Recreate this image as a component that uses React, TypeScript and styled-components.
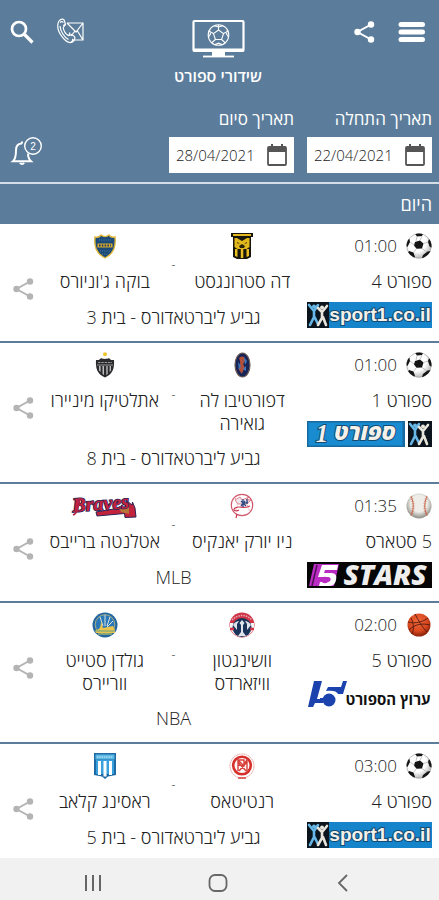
import React, { useState } from "react";
import styled, { createGlobalStyle } from "styled-components";

const steel = "#5b7d9b";
const ink = "#222";

const GlobalStyle = createGlobalStyle`
  *, *::before, *::after { box-sizing: border-box; }
  body {
    margin: 0;
    background: #fff;
    color: ${ink};
    font-family: "Open Sans", "Noto Sans", "DejaVu Sans", sans-serif;
    font-size: 18px;
    line-height: 24px;
  }
  svg { flex: none; overflow: visible; }
`;

const Page = styled.div`
  height: 100vh;
  display: flex;
  flex-direction: column;
`;

const Header = styled.header`
  background: ${steel};
  color: #fff;
  border-bottom: 2px solid #d3dee7;
`;

const TopBar = styled.div`
  display: grid;
  grid-template-columns: 1fr auto 1fr;
  padding: 18px 13px 0 10px;
`;

const Actions = styled.div<{ $end?: boolean }>`
  display: flex;
  align-items: center;
  justify-content: ${(p) => (p.$end ? "flex-end" : "flex-start")};
  gap: 23px;
  height: 28px;
`;

const IconButton = styled.button`
  display: inline-flex;
  align-items: center;
  justify-content: center;
  padding: 0;
  border: 0;
  background: none;
  color: inherit;
  cursor: pointer;
`;

const Brand = styled.h1`
  display: flex;
  flex-direction: column;
  align-items: center;
  gap: 8px;
  margin: 0;
  font-size: 16px;
  line-height: 20px;
  font-weight: 600;
`;

const FilterBar = styled.form`
  display: flex;
  align-items: flex-end;
  gap: 13px;
  padding: 21px 7px 9px;
`;

const DateField = styled.label`
  flex: 0 1 125px;
  min-width: 0;
  display: flex;
  flex-direction: column;
  gap: 6px;
  font-size: 17px;
`;

const DateBox = styled.span`
  display: flex;
  align-items: center;
  direction: ltr;
  height: 36px;
  padding: 0 7px;
  background: #fff;
  color: #555;
`;

const DateInput = styled.input`
  flex: 1;
  min-width: 0;
  padding: 0;
  border: 0;
  outline: 0;
  background: none;
  color: ${ink};
  font-family: inherit;
  font-size: 15px;
  font-weight: 300;
`;

const BellSlot = styled.div`
  margin-inline-start: auto;
  height: 36px;
  padding-left: 5px;
`;

const List = styled.main`
  flex: 1;
  min-height: 0;
  overflow-y: auto;
  scrollbar-width: none;
  font-weight: 300;
`;

const DayHeading = styled.h2`
  margin: 0;
  padding: 8px 7px;
  background: ${steel};
  color: #fff;
  font-size: 18px;
  font-weight: 400;
`;

const EventRow = styled.article`
  display: grid;
  grid-template-columns: 125px 1fr 34px;
  column-gap: 6px;
  padding: 8px 7px 12px 6px;
  border-bottom: 2px solid ${steel};
`;

const Channel = styled.div`
  display: flex;
  flex-direction: column;
`;

const TimeLine = styled.div`
  display: flex;
  align-items: center;
  gap: 9px;
  height: 28px;
  font-size: 17px;
`;

const ChannelName = styled.div`
  margin: 9px 0;
`;

const Match = styled.div`
  text-align: center;
`;

const Teams = styled.div`
  display: grid;
  grid-template-columns: 1fr 20px 1fr;
  align-items: center;
`;

const Team = styled.div`
  align-self: start;
  display: flex;
  flex-direction: column;
  align-items: center;
  min-height: 62px;
  line-height: 23px;
`;

const Crest = styled.span`
  display: flex;
  align-items: center;
  height: 28px;
  margin-bottom: 10px;
`;

const Dash = styled.span`
  padding-top: 4px;
  font-size: 12px;
`;

const Competition = styled.div`
  margin-top: 11px;
`;

const ShareSlot = styled.div`
  display: flex;
  justify-content: center;
  align-self: start;
  padding-top: 45px;
  color: #b4b4b4;
`;

const SystemBar = styled.nav`
  flex: none;
  display: flex;
  justify-content: center;
  gap: 101px;
  padding: 13px 4px 5px 0;
  background: #f1f1f1;
  color: #666;
`;

const ShareIcon = () => (
  <svg width="22" height="24" viewBox="0 0 22 24" aria-hidden="true">
    <path d="M18 4.500 4.500 12 18 19.500" fill="none" stroke="currentColor" strokeWidth="2" />
    <circle cx="18" cy="4.500" r="3.200" fill="currentColor" />
    <circle cx="4.500" cy="12" r="3.200" fill="currentColor" />
    <circle cx="18" cy="19.500" r="3.200" fill="currentColor" />
  </svg>
);

const MenuIcon = () => (
  <svg width="28" height="22" viewBox="0 0 28 22" aria-hidden="true">
    <path d="M3 3.500h21.500M3 11h21.500M3 18.500h21.500" stroke="currentColor" strokeWidth="5" strokeLinecap="round" />
  </svg>
);

const SearchIcon = () => (
  <svg width="24" height="24" viewBox="0 0 24 24" fill="none" stroke="currentColor" aria-hidden="true">
    <circle cx="9" cy="9" r="7" strokeWidth="2.700" />
    <path d="m14 14 8.500 8.500" strokeWidth="3.200" />
  </svg>
);

const ContactIcon = () => (
  <svg width="28" height="28" viewBox="0 0 28 28" fill="none" stroke="currentColor" strokeWidth="1.200" aria-hidden="true">
    <path d="M10 5h16v17H15M10 5l9 9 7-9M26 22l-5.500-9M14 18l4-5" />
    <path d="M2 3c2-2.500 5-2.300 5.500 0l.8 3c.3 1.500-2.300 2.600-2 4 .5 3.500 2.500 6 5 7.500 1.300.7 2.200-1.500 3.600-.8l2.200 1.600c1.800 1.300.4 4.800-2 5.800C9 26.800 0 14 .8 7c.1-1.500.5-2.900 1.200-4z" />
    <path d="M3 4.500c1.700-1.300 3-1 3.200.2M13.500 24.800c1.800-1 2.400-2.300 2.300-4M3 8c.4 5 4 11 8.500 13.600M6 7.500l3-1.300M12 17l1-2.400" />
  </svg>
);

const BellIcon = () => (
  <svg width="32" height="30" viewBox="0 0 32 30" fill="none" stroke="currentColor" strokeWidth="1.400" aria-hidden="true">
    <path d="M10 6.500c-4 0-6 3-6 6.800C4 20 3 22.500 1 24.300h18c-2-1.800-3-4.300-3-7.800" strokeWidth="2" />
    <path d="M10 6.500V4.600M8 25.800c.8 1.500 3.200 1.500 4 0" strokeWidth="2" />
    <circle cx="21" cy="9" r="8.300" />
    <text x="21" y="12.500" fontSize="10" textAnchor="middle" fill="currentColor" stroke="none" direction="ltr">2</text>
  </svg>
);

const TvLogo = () => (
  <svg width="53" height="40" viewBox="0 0 53 40" fill="none" stroke="currentColor" aria-hidden="true">
    <rect x="1.500" y="3" width="50" height="30" rx="1" strokeWidth="2.200" />
    <path d="M1 32h51" strokeWidth="3" />
    <path d="M20 36h13" strokeWidth="4" />
    <path d="M11 38.500h31" strokeWidth="1.800" />
    <g strokeWidth="1.100">
      <circle cx="26.500" cy="17" r="10.300" />
      <path d="m26.500 12 5 3.600-1.900 5.900h-6.200l-1.900-5.900zM26.500 12V7M31.500 15.600l5-2.600M29.600 21.500l4 3.600M23.400 21.500l-4 3.600M21.500 15.600l-5-2.600M22 7.800 26.500 9l4.500-1.200M35.500 12l-1 4 2 3M17.500 12l1 4-2 3M23 26.500l3.500-1.300 3.500 1.300" />
    </g>
  </svg>
);

const CalendarIcon = () => (
  <svg width="20" height="22" viewBox="0 0 20 22" aria-hidden="true">
    <path d="M2 3h16a1 1 0 0 1 1 1v16a1 1 0 0 1-1 1H2a1 1 0 0 1-1-1V4a1 1 0 0 1 1-1z" fill="none" stroke="currentColor" strokeWidth="1.800" />
    <path d="M1 3h18v5H1zM4 0h2v4H4zM14 0h2v4h-2z" fill="currentColor" />
  </svg>
);

const SoccerBall = () => (
  <svg width="26" height="26" viewBox="0 0 26 26" aria-hidden="true">
    <defs>
      <radialGradient id="soccer" cx="40%" cy="35%" r="65%">
        <stop offset="60%" stopColor="#fff" />
        <stop offset="100%" stopColor="#bbb" />
      </radialGradient>
      <clipPath id="soccerClip"><circle cx="13" cy="13" r="12.500" /></clipPath>
    </defs>
    <circle cx="13" cy="13" r="12.300" fill="url(#soccer)" stroke="#999" strokeWidth=".6" />
    <g clipPath="url(#soccerClip)" fill="#151515">
      <path d="m9 9 5-1.600 3.500 3-1.500 5-5.500.3L8 12.500z" />
      <path d="M8.500 0h9L16 3l-5 .6zM0 7l3.500-1L4 9l-2.500 5L0 13zM23 6l3 3v6l-2.500-1.500L22 9zM3 18l4.500 1.500L9 24l-2 2-6-5zM17 22l4.500-3.500L25 18l-3 7h-6z" />
    </g>
    <path d="m10 8 1-4.500M14 7.400l2-4.400M17.500 10.500 22 9M16 15.500l5 3.500M10 16l-2.500 3.500M8 12l-4-3" stroke="#aaa" strokeWidth=".7" />
  </svg>
);

const Baseball = () => (
  <svg width="26" height="26" viewBox="0 0 26 26" fill="none" aria-hidden="true">
    <defs>
      <radialGradient id="baseball" cx="50%" cy="40%" r="55%">
        <stop offset="60%" stopColor="#eeede8" />
        <stop offset="100%" stopColor="#9c9a94" />
      </radialGradient>
    </defs>
    <circle cx="13" cy="13" r="12.500" fill="url(#baseball)" />
    <path d="M5 3.500c3 6 3 13 0 19M21 3.500c-3 6-3 13 0 19" stroke="#c9684e" strokeWidth="1" />
    <path d="M5 3.500c3 6 3 13 0 19M21 3.500c-3 6-3 13 0 19" stroke="#c9684e" strokeWidth="3" strokeDasharray=".8 1.600" opacity=".6" />
  </svg>
);

const Basketball = () => (
  <svg width="26" height="26" viewBox="0 0 26 26" fill="none" aria-hidden="true">
    <defs>
      <radialGradient id="basket" cx="45%" cy="35%" r="60%">
        <stop offset="0%" stopColor="#f0693a" />
        <stop offset="70%" stopColor="#d9481f" />
        <stop offset="100%" stopColor="#97290f" />
      </radialGradient>
    </defs>
    <circle cx="13" cy="13" r="11.500" fill="url(#basket)" />
    <path d="M2 10c7 2 15 0 20-4M9 2c3 6 7 13 12 18M3 18c6-6 13-7 21-5M5 6c3 6 3 12 1 16" stroke="#541a10" strokeWidth=".9" />
  </svg>
);

const StrongestCrest = () => (
  <svg width="22" height="26" viewBox="0 0 22 26" aria-hidden="true">
    <path d="M0 0h22v4h-2v20l-4 2H6l-4-2V4H0z" fill="#17150c" />
    <path d="M2 1h18v2H2zM3.500 5h2.500l5 3 5-3h2.500v9l-3 2H6.500l-3-2z" fill="#e3b81d" />
    <path d="M4 16h2.500v8L4 23zM9.800 16h2.500v9h-2.500zM15.500 16H18v7l-2.500 1z" fill="#e8bd1e" />
    <path d="m6 9 3 1.500H6.500zM16 9l-3 1.500h2.500zM8 13l3-2 3 2-1 2H9z" fill="#2b240d" />
  </svg>
);

const BocaCrest = () => (
  <svg width="22" height="25" viewBox="0 0 22 25" aria-hidden="true">
    <path d="M1 3c3 .8 5-.5 6-2 1.500 1.300 2.600 1.600 4 1.600S13.500 2.300 15 1c1 1.500 3 2.800 6 2 .8 9-.5 16-10 21C1.500 19 .2 12 1 3z" fill="#1b4a78" stroke="#dfb73a" strokeWidth="1.400" />
    <path d="M3.500 9.500h15v4h-15z" fill="#d9aa30" />
    <path d="M5 11.500h12" stroke="#1b3b64" strokeWidth="2" strokeDasharray="1.600 1.200" />
    <path d="M5 6h12M6 17h10M8 20h6" stroke="#5684a8" strokeWidth=".9" strokeDasharray="1 1.200" />
  </svg>
);

const GuairaCrest = () => (
  <svg width="17" height="26" viewBox="0 0 17 26" aria-hidden="true">
    <ellipse cx="8.500" cy="13" rx="7.500" ry="12" fill="#172457" stroke="#6d5b55" strokeWidth="1.200" />
    <path d="M5 6c4-3 6-1 6 2s-3 3-1 6c2 2-1 4-2 8-2-3-4-4-3-7s2-4 0-9z" fill="#b0503a" />
    <path d="M10 5l3 4-2 4zM4 10l3 4-2 4zM9 17l3-3v5z" fill="#3f7abf" />
  </svg>
);

const MineiroCrest = () => (
  <svg width="20" height="26" viewBox="0 0 20 26" aria-hidden="true">
    <circle cx="10" cy="2.300" r="2" fill="#efc52e" />
    <path d="M1 8c3 .3 4-.5 5-2 2 1.200 6 1.200 8 0 1 1.500 2 2.300 5 2 .5 8-1 14-9 17.500C2 22 .5 16 1 8z" fill="#2b2b2d" />
    <path d="M4 14h1.600v6L4 18.500zM7.500 14h1.500v9l-1.500-1zM11.300 14h1.400v8l-1.400 1zM14.600 14H16v4.500l-1.400 1.600z" fill="#bbb" />
    <path d="M3 10.500h14" stroke="#999" strokeWidth="1" strokeDasharray="2.500 .8" />
    <path d="M2 13h16" stroke="#999" strokeWidth="1" />
  </svg>
);

const YankeesLogo = () => (
  <svg width="24" height="26" viewBox="0 0 24 26" fill="none" aria-hidden="true">
    <circle cx="12" cy="12" r="10.700" stroke="#d0596d" strokeWidth="1.200" />
    <path d="M5 5c3 4 3 9 0 13M19 6c-2 4-2 9 1 12" stroke="#e4a3ab" strokeDasharray="1.200 .8" />
    <path d="m5 7 5-3 2 3 7-3-3 3h5l-4 4H8z" fill="#eee7ed" stroke="#d45567" strokeWidth=".7" />
    <path d="M4 16c4-5 9 1 16-3M5 15c-3 2 1 4 4 2M7 21l-1 4" stroke="#ce3950" strokeWidth="1.200" />
    <path d="M11 8l5 5M15 8l-4 5M13 6v8M17 6v5M12 11l6-2" stroke="#314c84" strokeWidth="1.300" />
  </svg>
);

const BravesLogo = () => (
  <svg width="66" height="26" viewBox="0 0 66 26" aria-hidden="true">
    <path d="m24 19 29-5 2-6 5 4 .5-3 2.500 6 1 9-11 .500-.500-4L25 23z" fill="#c3223c" stroke="#2c2354" strokeWidth="1" />
    <path d="m47 15 10-1v7l-8-2z" fill="#b87438" />
    <text x="29" y="17" transform="rotate(-4 29 17)" fontFamily="Liberation Serif" fontSize="20" fontStyle="italic" fontWeight="700" textAnchor="middle" fill="#c4213d" stroke="#29255b" strokeWidth="1.600" paintOrder="stroke" direction="ltr">Braves</text>
    <path d="M1 22c4-1 5-7 7-17" fill="none" stroke="#b52142" strokeWidth="1.800" />
  </svg>
);

const WizardsLogo = () => (
  <svg width="26" height="26" viewBox="0 0 26 26" aria-hidden="true">
    <circle cx="13" cy="13" r="12.500" fill="#cf3348" />
    <path d="M1 11h24v6c-3 5-7 8-12 8S4 22 1 17z" fill="#f7f2f3" />
    <circle cx="13" cy="15.500" r="9.500" fill="#193359" />
    <path d="m13 8 2.500 3-1.500 2v7l3 4h-8l3-4v-7l-1.500-2zM4 13c2-3 4-4 6-4l-2 3v6zM22 13c-2-3-4-4-6-4l2 3v6z" fill="#dfe4ec" />
    <path d="M3 8c6-6 14-6 20 0" fill="none" stroke="#e7a7ae" strokeWidth="1.500" strokeDasharray="1.500 1" />
    <path d="M1 17h4M21 17h4" stroke="#cf3348" strokeWidth="2.500" />
  </svg>
);

const WarriorsLogo = () => (
  <svg width="26" height="26" viewBox="0 0 26 26" aria-hidden="true">
    <circle cx="13" cy="13" r="12.500" fill="#2265a0" />
    <circle cx="13" cy="12.500" r="9.800" fill="#2a78b8" stroke="#c9c27a" strokeWidth=".8" />
    <path d="M13 3v11M8 5l3 9M18 5l-3 9M21 9l-6 6" stroke="#d8e4df" strokeWidth="1" />
    <path d="M4 18c4 0 5-4 5-9l2 7 10-2 2 4v3H4z" fill="#ebc44d" />
    <path d="M3 19h20M6 22h14" stroke="#91ad73" strokeWidth="1.300" />
  </svg>
);

const RentistasCrest = () => (
  <svg width="26" height="26" viewBox="0 0 26 26" fill="none" aria-hidden="true">
    <circle cx="13" cy="13" r="12" stroke="#e9a7a4" strokeWidth="1" strokeDasharray="2 .5" />
    <circle cx="13" cy="12.500" r="8.800" fill="#fff8f7" stroke="#d6302c" strokeWidth="2.600" />
    <path d="M9 18V7l5 5 4-5v11M9 7h6v6l-6-1M10 18l8-9M9 9l8 9" stroke="#d7403b" strokeWidth="1.400" />
    <path d="M9 25h8" stroke="#d6423e" strokeWidth="1.500" />
  </svg>
);

const RacingCrest = () => (
  <svg width="22" height="26" viewBox="0 0 22 26" aria-hidden="true">
    <path d="M0 0h22v22l-8 1.500-3 2.500-3-2.500L0 22z" fill="#1e6aa5" />
    <path d="M1.500 1.500h19v5h-19z" fill="#5bb8e4" />
    <path d="M3 4h16" stroke="#d7edf8" strokeDasharray="1.500 .8" />
    <path d="M2 7h18v14H2z" fill="#38a1dd" />
    <path d="M4 8h3v14H4zM9.500 8h3v15.500h-3zM15 8h3v14h-3z" fill="#fff" />
  </svg>
);

const Dancers = ({ x }: { x: number }) => (
  <g transform={`translate(${x} 0)`} fill="none" strokeLinecap="round">
    <rect width="22" height="26" fill="#0b141c" />
    <circle cx="7" cy="4.500" r="2" fill="#67b7e9" />
    <path d="m2 3 5 6 4-6M7 9v6L3 23M7 14l4 8" stroke="#67b7e9" strokeWidth="2.600" />
    <circle cx="15" cy="5.500" r="2" fill="#e8e5dc" />
    <path d="m11 6 4 4 5-6M15 10v6l-4 7M16 15l3 8" stroke="#e8e5dc" strokeWidth="2.600" />
  </g>
);

const Sport1SiteLogo = () => (
  <svg width="125" height="26" viewBox="0 0 125 26" role="img" aria-label="sport1.co.il">
    <rect width="125" height="26" fill="#1684ca" />
    <Dancers x={0} />
    <text x="73" y="19" fontFamily="Liberation Sans" fontSize="19" fontWeight="700" textAnchor="middle" fill="#f3f1e9" stroke="#174a70" strokeWidth="2" paintOrder="stroke" direction="ltr">sport1.co.il</text>
  </svg>
);

const Sport1Logo = () => (
  <svg width="125" height="26" viewBox="0 0 125 26" role="img" aria-label="ספורט 1">
    <rect width="98" height="26" fill="#17699f" />
    <rect x="1.500" y="1.500" width="94" height="23" fill="#198bd1" />
    <Dancers x={101} />
    <rect x="123" width="2" height="26" fill="#0b141c" />
    <g fontWeight="800" fontStyle="italic" fill="#f3f1e9" stroke="#174a70" strokeWidth="2" paintOrder="stroke" textAnchor="middle">
      <text x="58" y="19" fontSize="22">ספורט</text>
      <text x="15" y="21" fontFamily="Liberation Serif" fontSize="25" direction="ltr">1</text>
    </g>
  </svg>
);

const FiveStarsLogo = () => (
  <svg width="125" height="26" viewBox="0 0 125 26" role="img" aria-label="5 STARS">
    <rect width="125" height="26" fill="#050505" />
    <path d="M7 2h25l-5 22H2z" fill="#b92bc2" />
    <path d="M5 24 10 3" stroke="#4f1057" strokeWidth="1.500" />
    <path d="M15 3h16l-1 5H18l-1 3h7c5 0 6 3 5 7-1 5-4 6-8 6h-9l1-4h8c3 0 4-5 0-5H11z" fill="#fff" />
    <circle cx="18" cy="18" r="3.300" fill="#b92bc2" />
    <text x="78" y="23" fontSize="28" fontWeight="800" fontStyle="italic" textAnchor="middle" fill="#eee" direction="ltr">STARS</text>
  </svg>
);

const SportChannelLogo = () => (
  <svg width="125" height="26" viewBox="0 0 125 26" role="img" aria-label="ערוץ הספורט">
    <path d="M7 0h8l-5 18h8l-2 4H8l-2 4H1z" fill="#1b42ad" />
    <circle cx="22" cy="19" r="6.500" fill="#1b42ad" />
    <path d="M13 17h9v4h-9z" fill="#1b42ad" />
    <path d="M21 6h13l2-6h4l-4 13h-5c-1-3-6-4-12-3z" fill="#1b42ad" />
    <text x="81" y="24" fontSize="15" fontWeight="700" textAnchor="middle" fill="#111">ערוץ הספורט</text>
  </svg>
);

interface Side { name: string; crest: React.ReactNode }
interface SportEvent {
  time: string;
  ball: React.ReactNode;
  channel: string;
  logo: React.ReactNode;
  home: Side;
  away: Side;
  competition: string;
}

const events: SportEvent[] = [
  {
    time: "01:00", ball: <SoccerBall />, channel: "ספורט 4", logo: <Sport1SiteLogo />,
    home: { name: "דה סטרונגסט", crest: <StrongestCrest /> },
    away: { name: "בוקה ג'וניורס", crest: <BocaCrest /> },
    competition: "גביע ליברטאדורס - בית 3",
  },
  {
    time: "01:00", ball: <SoccerBall />, channel: "ספורט 1", logo: <Sport1Logo />,
    home: { name: "דפורטיבו לה גואירה", crest: <GuairaCrest /> },
    away: { name: "אתלטיקו מיניירו", crest: <MineiroCrest /> },
    competition: "גביע ליברטאדורס - בית 8",
  },
  {
    time: "01:35", ball: <Baseball />, channel: "5 סטארס", logo: <FiveStarsLogo />,
    home: { name: "ניו יורק יאנקיס", crest: <YankeesLogo /> },
    away: { name: "אטלנטה ברייבס", crest: <BravesLogo /> },
    competition: "MLB",
  },
  {
    time: "02:00", ball: <Basketball />, channel: "ספורט 5", logo: <SportChannelLogo />,
    home: { name: "וושינגטון וויזארדס", crest: <WizardsLogo /> },
    away: { name: "גולדן סטייט ווריירס", crest: <WarriorsLogo /> },
    competition: "NBA",
  },
  {
    time: "03:00", ball: <SoccerBall />, channel: "ספורט 4", logo: <Sport1SiteLogo />,
    home: { name: "רנטיטאס", crest: <RentistasCrest /> },
    away: { name: "ראסינג קלאב", crest: <RacingCrest /> },
    competition: "גביע ליברטאדורס - בית 5",
  },
];

const TeamView = ({ side }: { side: Side }) => (
  <Team>
    <Crest>{side.crest}</Crest>
    <span>{side.name}</span>
  </Team>
);

const EventView = ({ event }: { event: SportEvent }) => (
  <EventRow>
    <Channel>
      <TimeLine>
        {event.ball}
        <time>{event.time}</time>
      </TimeLine>
      <ChannelName>{event.channel}</ChannelName>
      {event.logo}
    </Channel>
    <Match>
      <Teams>
        <TeamView side={event.home} />
        <Dash>-</Dash>
        <TeamView side={event.away} />
      </Teams>
      <Competition>{event.competition}</Competition>
    </Match>
    <ShareSlot>
      <IconButton type="button" aria-label="שיתוף"><ShareIcon /></IconButton>
    </ShareSlot>
  </EventRow>
);

const DatePicker = ({ label, initial }: { label: string; initial: string }) => {
  const [value, setValue] = useState(initial);
  return (
    <DateField>
      {label}
      <DateBox>
        <DateInput type="text" value={value} onChange={(e) => setValue(e.target.value)} />
        <CalendarIcon />
      </DateBox>
    </DateField>
  );
};

export default function App() {
  return (
    <Page dir="rtl" lang="he">
      <GlobalStyle />
      <Header>
        <TopBar>
          <Actions>
            <IconButton type="button" aria-label="תפריט"><MenuIcon /></IconButton>
            <IconButton type="button" aria-label="שיתוף"><ShareIcon /></IconButton>
          </Actions>
          <Brand><TvLogo />שידורי ספורט</Brand>
          <Actions $end>
            <IconButton type="button" aria-label="יצירת קשר"><ContactIcon /></IconButton>
            <IconButton type="button" aria-label="חיפוש"><SearchIcon /></IconButton>
          </Actions>
        </TopBar>
        <FilterBar>
          <DatePicker label="תאריך התחלה" initial="22/04/2021" />
          <DatePicker label="תאריך סיום" initial="28/04/2021" />
          <BellSlot>
            <IconButton type="button" aria-label="התראות"><BellIcon /></IconButton>
          </BellSlot>
        </FilterBar>
      </Header>
      <List>
        <DayHeading>היום</DayHeading>
        {events.map((event, i) => <EventView key={i} event={event} />)}
      </List>
      <SystemBar>
        <IconButton type="button" aria-label="חזרה">
          <svg width="24" height="24" viewBox="0 0 24 24" fill="none" stroke="currentColor" strokeWidth="1.800"><path d="m16 4-8 8 8 8" /></svg>
        </IconButton>
        <IconButton type="button" aria-label="בית">
          <svg width="24" height="24" viewBox="0 0 24 24" fill="none" stroke="currentColor" strokeWidth="1.800"><rect x="3.500" y="4" width="17" height="16" rx="5.500" /></svg>
        </IconButton>
        <IconButton type="button" aria-label="יישומים אחרונים">
          <svg width="24" height="24" viewBox="0 0 24 24" fill="none" stroke="currentColor" strokeWidth="2"><path d="M5 4v16M12 4v16M19 4v16" /></svg>
        </IconButton>
      </SystemBar>
    </Page>
  );
}
